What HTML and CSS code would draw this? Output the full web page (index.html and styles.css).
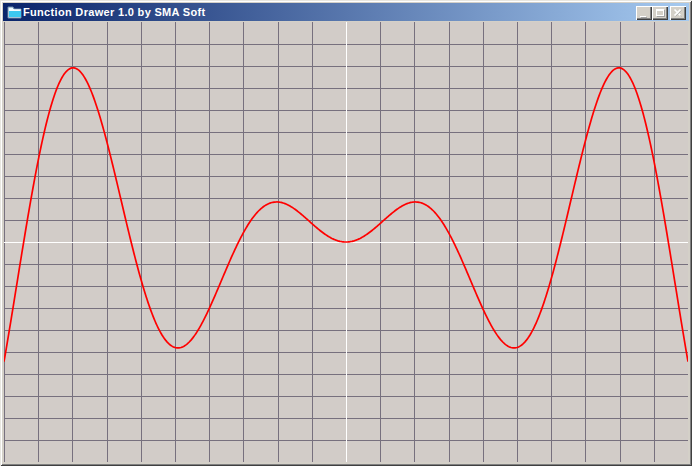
FILE: index.html
```html
<!DOCTYPE html>
<html>
<head>
<meta charset="utf-8">
<title>Function Drawer 1.0 by SMA Soft</title>
<link rel="stylesheet" href="styles.css">
</head>
<body>
<div class="window">
  <div class="titlebar">
    <svg class="app-icon" width="15" height="16" viewBox="0 0 15 16">
      <path d="M1 3h5l1 2h7v9H1z" fill="#e8f8ff" stroke="#6a8aa8" stroke-width="1"/>
      <path d="M2 7h12v6H2z" fill="#3cc8f0"/>
      <path d="M2 6h12" stroke="#ffffff" stroke-width="1"/>
    </svg>
    <span class="title">Function Drawer 1.0 by SMA Soft</span>
    <div class="controls">
      <div class="btn">
        <svg width="16" height="14" viewBox="0 0 16 14"><path d="M4 10h6v1H4z" fill="#fff"/><path d="M5 11h6v1H5z" fill="#a0a0a0"/></svg>
      </div>
      <div class="btn gap">
        <svg width="16" height="14" viewBox="0 0 16 14"><path d="M4 3h8v7H4z M5 5v4h6V5z" fill="#fff" fill-rule="evenodd"/><path d="M12 4h1v7H5v-1h7z" fill="#a0a0a0"/></svg>
      </div>
      <div class="btn">
        <svg width="16" height="14" viewBox="0 0 16 14"><path d="M4.5 3.5l6 6M10.5 3.5l-6 6" stroke="#fff" stroke-width="1.6"/><path d="M5.5 10.5l6-6M11.5 10.5l-1-1" stroke="#a8a8a8" stroke-width="0.8"/></svg>
      </div>
    </div>
  </div>
  <div class="client">
    <svg id="plot" class="plot" width="684" height="440" viewBox="0 0 684 440"></svg>
  </div>
</div>
<script src="script.js"></script>
</body>
</html>
```

FILE: styles.css
```css
html, body {
  margin: 0;
  padding: 0;
  background: #d4d0c8;
}
.window {
  width: 692px;
  height: 466px;
  box-sizing: border-box;
  padding: 3px 3px 0 3px;
  background: #d4d0c8;
  box-shadow: inset 1px 1px 0 #e8e6e0, inset -1px -1px 0 #404040, inset 2px 2px 0 #ffffff, inset -2px -2px 0 #808080;
  display: flex;
  flex-direction: column;
}
.titlebar {
  height: 18px;
  flex: none;
  display: flex;
  align-items: center;
  background: linear-gradient(to right, #0a246a, #a6caf0);
  padding-left: 4px;
}
.app-icon {
  flex: none;
  margin-right: 1px;
}
.title {
  font-family: "Liberation Sans", Arial, sans-serif;
  font-weight: bold;
  font-size: 11px;
  letter-spacing: 0.32px;
  color: #ffffff;
  white-space: nowrap;
  flex: 1;
}
.controls {
  display: flex;
  padding-right: 3px;
  padding-top: 1px;
}
.btn {
  width: 16px;
  height: 14px;
  background: #d4d0c8;
  box-shadow: inset 1px 1px 0 #ffffff, inset -1px -1px 0 #404040, inset -2px -2px 0 #808080;
  display: flex;
}
.btn.gap {
  margin-right: 2px;
}
.client {
  margin: 1px 1px 0 1px;
  width: 684px;
  height: 440px;
  background: #d2ccc8;
}
.plot {
  display: block;
}
.grid {
  stroke: #77707e;
  stroke-width: 1;
  shape-rendering: crispEdges;
}
.axis {
  stroke: #ffffff;
  stroke-width: 1;
  shape-rendering: crispEdges;
}
.curve {
  fill: none;
  stroke: #ff0000;
  stroke-width: 1.7;
}
```

FILE: script.js
```js
(function () {
  var NS = "http://www.w3.org/2000/svg";
  var svg = document.getElementById("plot");
  var W = 684, H = 440, sx = 34.2, sy = 22;
  function line(x1, y1, x2, y2, cls) {
    var l = document.createElementNS(NS, "line");
    l.setAttribute("x1", x1); l.setAttribute("y1", y1);
    l.setAttribute("x2", x2); l.setAttribute("y2", y2);
    l.setAttribute("class", cls);
    svg.appendChild(l);
  }
  for (var k = 0; k <= 20; k++) {
    var x = Math.round(k * sx) + 0.5;
    if (k !== 10 && k !== 20) line(x, 0, x, H, "grid");
    var y = Math.round(k * sy) + 0.5;
    if (k !== 10 && k !== 0) line(0, y, W, y, "grid");
  }
  line(342.5, 0, 342.5, H, "axis");
  line(0, 220.5, W, 220.5, "axis");
  var pts = [];
  for (var px = 0; px <= W; px += 1) {
    var xv = px / sx - 10;
    var yv = xv * Math.sin(xv);
    pts.push(px + "," + (220 - yv * sy).toFixed(2));
  }
  var pl = document.createElementNS(NS, "polyline");
  pl.setAttribute("points", pts.join(" "));
  pl.setAttribute("class", "curve");
  svg.appendChild(pl);
})();
```
